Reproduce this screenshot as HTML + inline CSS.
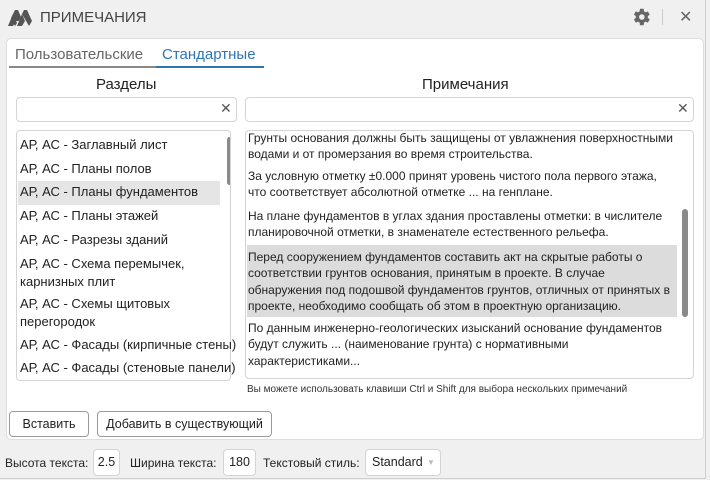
<!DOCTYPE html>
<html><head><meta charset="utf-8"><style>
*{margin:0;padding:0;box-sizing:border-box}
body{width:710px;height:480px;background:#f0f0f0;font-family:"Liberation Sans",sans-serif;color:#222;position:relative;overflow:hidden}
.a{position:absolute;white-space:nowrap}
.win{position:absolute;left:0;top:0;width:706px;height:479px;border:1px solid #cfcfcf;border-top:none;border-left:none}
.panel{position:absolute;left:6px;top:38px;width:698px;height:402px;background:#fff;border:1px solid #ddd;border-radius:5px}
.box{position:absolute;background:#fff;border:1px solid #d4d4d4;border-radius:4px}
.l{font-size:13px;color:#222}
.r{font-size:12px;line-height:16.3px;color:#222}
.btn{position:absolute;background:#fff;border:1px solid #9a9a9a;border-radius:4px;font-size:12.5px;text-align:center;line-height:24px;color:#222}
.x{position:absolute;font-size:16px;color:#555}
.b{font-size:12px}
</style></head><body>
<div class="win"></div>
<svg class="a" style="left:8px;top:10px" width="25" height="16" viewBox="0 0 25 16"><path d="M0 16 L5 4 L8 11 L5 16Z M5 4 L7 0 L10 0 L13 7 L11 11 L8 11Z" fill="#555"/><path d="M9 16 L14 4 L17 11 L14 16Z M14 4 L16 0 L19 0 L24 11 L21 16 Z" fill="#555"/><path d="M5 4 L9 13 L7 16 L3 8Z" fill="#555"/></svg>
<div class="a" style="left:40px;top:9px;font-size:15px;color:#444">ПРИМЕЧАНИЯ</div>
<svg class="a" style="left:630px;top:6px" width="22" height="22" viewBox="0 0 24 24"><path fill="#666" d="M19.4 13a7.5 7.5 0 0 0 0-2l2.1-1.6-2-3.5-2.5 1a7 7 0 0 0-1.7-1L14.9 3h-4l-.4 2.9a7 7 0 0 0-1.7 1l-2.5-1-2 3.5L6.4 11a7.5 7.5 0 0 0 0 2l-2.1 1.6 2 3.5 2.5-1a7 7 0 0 0 1.7 1l.4 2.9h4l.4-2.9a7 7 0 0 0 1.7-1l2.5 1 2-3.5zM12.9 15a3 3 0 1 1 0-6 3 3 0 0 1 0 6z"/></svg>
<div class="a" style="left:662px;top:9px;width:1px;height:16px;background:#ccc"></div>
<div class="x" style="left:679px;top:7px;font-size:16px;color:#666">✕</div>
<div class="panel"></div>
<div class="a" style="left:15px;top:46px;font-size:15px;color:#666">Пользовательские</div>
<div class="a" style="left:162px;top:46px;font-size:15px;color:#2e75b6">Стандартные</div>
<div class="a" style="left:9px;top:66px;width:147px;height:2px;background:#888"></div>
<div class="a" style="left:156px;top:66px;width:108px;height:2px;background:#2e75b6"></div>
<div class="a" style="left:96px;top:76px;font-size:15px">Разделы</div>
<div class="a" style="left:422px;top:76px;font-size:15px">Примечания</div>
<div class="box" style="left:16px;top:97px;width:221px;height:25px"></div>
<div class="x" style="left:220px;top:100px;font-size:14px">✕</div>
<div class="box" style="left:245px;top:97px;width:449px;height:25px"></div>
<div class="x" style="left:677px;top:100px;font-size:14px">✕</div>
<div class="box" style="left:16px;top:130px;width:215px;height:251px;overflow:hidden">
<div class="a" style="left:1px;top:50px;width:202px;height:24px;background:#e5e5e5"></div>
<div class="a" style="left:210px;top:6px;width:5px;height:48px;border-radius:3px;background:#8a8a8a"></div>
</div>
<div class="a l" style="left:20px;top:137px">АР, АС - Заглавный лист</div>
<div class="a l" style="left:20px;top:161px">АР, АС - Планы полов</div>
<div class="a l" style="left:20px;top:184px">АР, АС - Планы фундаментов</div>
<div class="a l" style="left:20px;top:208px">АР, АС - Планы этажей</div>
<div class="a l" style="left:20px;top:232px">АР, АС - Разрезы зданий</div>
<div class="a l" style="left:20px;top:256px">АР, АС - Схема перемычек,</div>
<div class="a l" style="left:20px;top:274px">карнизных плит</div>
<div class="a l" style="left:20px;top:296px">АР, АС - Схемы щитовых</div>
<div class="a l" style="left:20px;top:314px">перегородок</div>
<div class="a l" style="left:20px;top:337px">АР, АС - Фасады (кирпичные стены)</div>
<div class="a l" style="left:20px;top:360px">АР, АС - Фасады (стеновые панели)</div>
<div class="box" style="left:245px;top:130px;width:449px;height:249px;overflow:hidden">
<div class="a" style="left:1px;top:114px;width:430px;height:72px;background:#dcdcdc"></div>
<div class="a" style="left:436px;top:78px;width:6px;height:108px;border-radius:3px;background:#8a8a8a"></div>
</div>
<div class="a r" style="left:248px;top:130px">Грунты основания должны быть защищены от увлажнения поверхностными<br>водами и от промерзания во время строительства.</div>
<div class="a r" style="left:248px;top:168px">За условную отметку ±0.000 принят уровень чистого пола первого этажа,<br>что соответствует абсолютной отметке ... на генплане.</div>
<div class="a r" style="left:248px;top:208px">На плане фундаментов в углах здания проставлены отметки: в числителе<br>планировочной отметки, в знаменателе естественного рельефа.</div>
<div class="a r" style="left:248px;top:249px">Перед сооружением фундаментов составить акт на скрытые работы о<br>соответствии грунтов основания, принятым в проекте. В случае<br>обнаружения под подошвой фундаментов грунтов, отличных от принятых в<br>проекте, необходимо сообщать об этом в проектную организацию.</div>
<div class="a r" style="left:248px;top:320px">По данным инженерно-геологических изысканий основание фундаментов<br>будут служить ... (наименование грунта) с нормативными<br>характеристиками...</div>
<div class="a" style="left:247px;top:384px;font-size:10px;color:#333">Вы можете использовать клавиши Ctrl и Shift для выбора нескольких примечаний</div>
<div class="btn" style="left:9px;top:411px;width:80px;height:26px">Вставить</div>
<div class="btn" style="left:97px;top:411px;width:175px;height:26px">Добавить в существующий</div>
<div class="a b" style="left:5px;top:456px">Высота текста:</div>
<div class="box" style="left:93px;top:449px;width:27px;height:27px;font-size:12.5px;text-align:center;line-height:25px">2.5</div>
<div class="a b" style="left:130px;top:456px">Ширина текста:</div>
<div class="box" style="left:223px;top:449px;width:33px;height:27px;font-size:12.5px;text-align:center;line-height:25px">180</div>
<div class="a b" style="left:263px;top:456px">Текстовый стиль:</div>
<div class="box" style="left:365px;top:449px;width:76px;height:27px;font-size:12.5px;line-height:25px;padding-left:6px">Standard<span style="position:absolute;left:61px;top:0;color:#bbb;font-size:8px">▼</span></div>
</body></html>
